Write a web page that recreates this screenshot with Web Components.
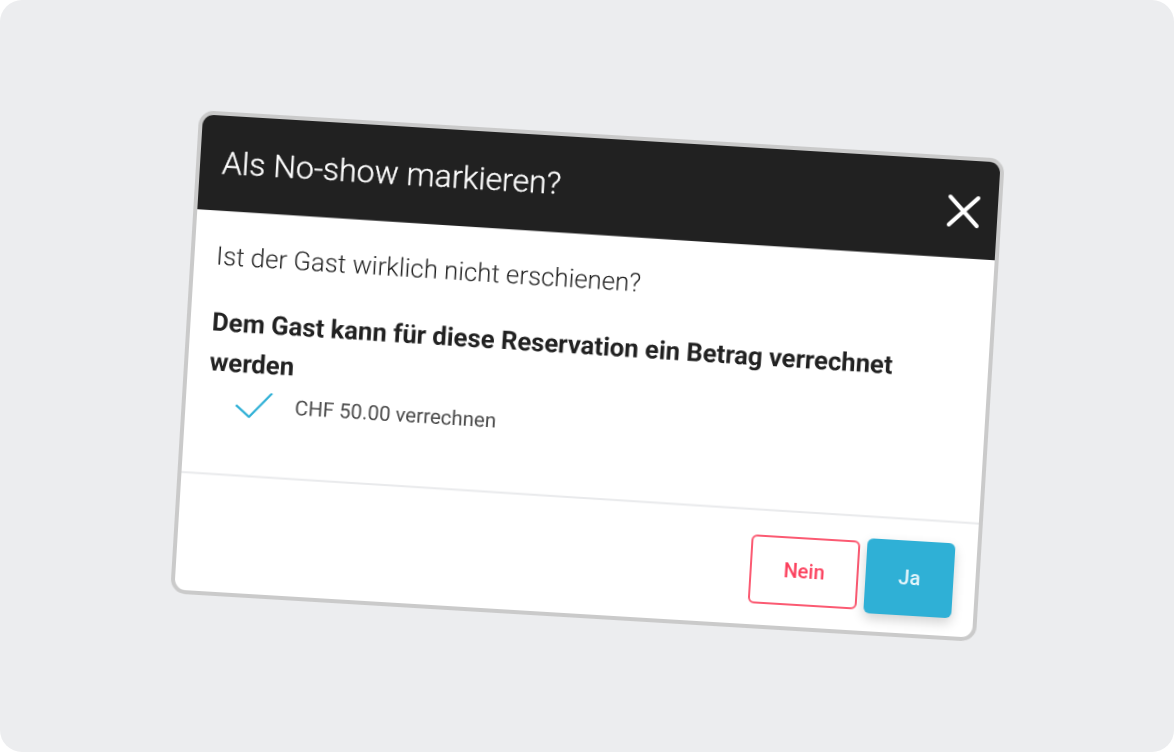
<!DOCTYPE html>
<html lang="de">
<head>
<meta charset="utf-8">
<title>Als No-show markieren?</title>
<style>
    html, body { margin: 0; padding: 0; background: #fff; }
</style>
</head>
<body>
<preview-stage>
    <noshow-dialog heading="Als No-show markieren?">
        <p slot="question">Ist der Gast wirklich nicht erschienen?</p>
        <strong slot="notice">Dem Gast kann für diese Reservation ein Betrag verrechnet werden</strong>
        <check-row slot="option">CHF 50.00 verrechnen</check-row>
        <dialog-button slot="actions" variant="outline">Nein</dialog-button>
        <dialog-button slot="actions" variant="primary">Ja</dialog-button>
    </noshow-dialog>
</preview-stage>

<script>
class PreviewStage extends HTMLElement {
    constructor() {
        super();
        this.attachShadow({ mode: 'open' });
        this.shadowRoot.innerHTML = `
            <style>
                :host {
                    display: flex;
                    align-items: center;
                    justify-content: center;
                    width: 1174px;
                    height: 752px;
                    background: #ecedef;
                    border-radius: 22px;
                    overflow: hidden;
                }
            </style>
            <slot></slot>
        `;
    }
}

class NoshowDialog extends HTMLElement {
    constructor() {
        super();
        this.attachShadow({ mode: 'open' });
    }

    connectedCallback() {
        const heading = this.getAttribute('heading') || '';
        this.shadowRoot.innerHTML = `
            <style>
                :host {
                    display: flex;
                    flex-direction: column;
                    box-sizing: border-box;
                    width: 807px;
                    height: 484px;
                    background: #fff;
                    border: 4px solid #cacaca;
                    border-radius: 15px;
                    overflow: hidden;
                    font-family: Roboto, "Liberation Sans", sans-serif;
                    transform: rotate(3.45deg);
                    filter: blur(0.6px);
                }
                header {
                    display: flex;
                    align-items: flex-start;
                    justify-content: space-between;
                    box-sizing: border-box;
                    height: 98px;
                    padding: 28px 17px 0 22px;
                    background: #212121;
                    color: #fff;
                    /* the photographed header edge runs a touch steeper than the frame */
                    clip-path: polygon(0 0, 100% 0, 100% 100%, 0 95px);
                }
                h1 {
                    margin: 0;
                    font-size: 32px;
                    line-height: 38px;
                    font-weight: 300;
                    -webkit-text-stroke: 0.3px #fff;
                }
                .close {
                    width: 34px;
                    height: 34px;
                    margin-top: 6px;
                }
                .body {
                    flex: 1;
                    padding: 26px 90px 0 22px;
                    color: #212121;
                    transform: rotate(0.2deg);
                    transform-origin: left top;
                }
                .rule {
                    height: 2px;
                    background: #e9eaec;
                    transform: rotate(0.25deg);
                }
                ::slotted(p) {
                    margin: 0 0 29.5px 0;
                    font-size: 25.8px;
                    line-height: 32px;
                    font-weight: 300;
                }
                ::slotted(strong) {
                    display: block;
                    font-size: 25.7px;
                    line-height: 40px;
                    font-weight: 700;
                }
                footer {
                    display: flex;
                    justify-content: flex-end;
                    align-items: center;
                    gap: 7px;
                    box-sizing: border-box;
                    height: 115px;
                    padding: 3px 22px 0 0;
                }
            </style>
            <header>
                <h1>${heading}</h1>
                <svg class="close" viewBox="0 0 34 34" fill="none" stroke="#fff" stroke-width="4" stroke-linecap="round">
                    <path d="M3 3 L31 31 M31 3 L3 31"/>
                </svg>
            </header>
            <div class="body">
                <slot name="question"></slot>
                <slot name="notice"></slot>
                <slot name="option"></slot>
            </div>
            <div class="rule"></div>
            <footer><slot name="actions"></slot></footer>
        `;
    }
}

class CheckRow extends HTMLElement {
    constructor() {
        super();
        this.attachShadow({ mode: 'open' });
        this.shadowRoot.innerHTML = `
            <style>
                :host {
                    display: flex;
                    align-items: center;
                    gap: 22px;
                    margin: 6px 0 0 28px;
                    font-size: 20.5px;
                    line-height: 30px;
                    font-weight: 400;
                    color: #4a4a4a;
                }
                svg { width: 38px; height: 26px; flex: none; }
            </style>
            <svg viewBox="0 0 38 26" fill="none" stroke="#2fb0d6" stroke-width="2.2">
                <path d="M1 14 L14.7 25 L36.5 0"/>
            </svg>
            <span><slot></slot></span>
        `;
    }
}

class DialogButton extends HTMLElement {
    constructor() {
        super();
        this.attachShadow({ mode: 'open' });
    }

    connectedCallback() {
        const primary = this.getAttribute('variant') === 'primary';
        this.shadowRoot.innerHTML = `
            <style>
                :host {
                    display: flex;
                    align-items: center;
                    justify-content: center;
                    box-sizing: border-box;
                    width: ${primary ? '88px' : '109px'};
                    height: ${primary ? '75px' : '69px'};
                    border-radius: 6px;
                    font-size: 20px;
                    font-weight: 500;
                    color: ${primary ? '#e8f6fb' : '#fb3f5c'};
                    background: ${primary ? '#2fb0d6' : '#fff'};
                    border: ${primary ? 'none' : '2px solid #fb5a72'};
                    box-shadow: ${primary ? '0 5px 12px rgba(0,0,0,0.18)' : 'none'};
                }
            </style>
            <slot></slot>
        `;
    }
}

customElements.define('preview-stage', PreviewStage);
customElements.define('noshow-dialog', NoshowDialog);
customElements.define('check-row', CheckRow);
customElements.define('dialog-button', DialogButton);
</script>
</body>
</html>
